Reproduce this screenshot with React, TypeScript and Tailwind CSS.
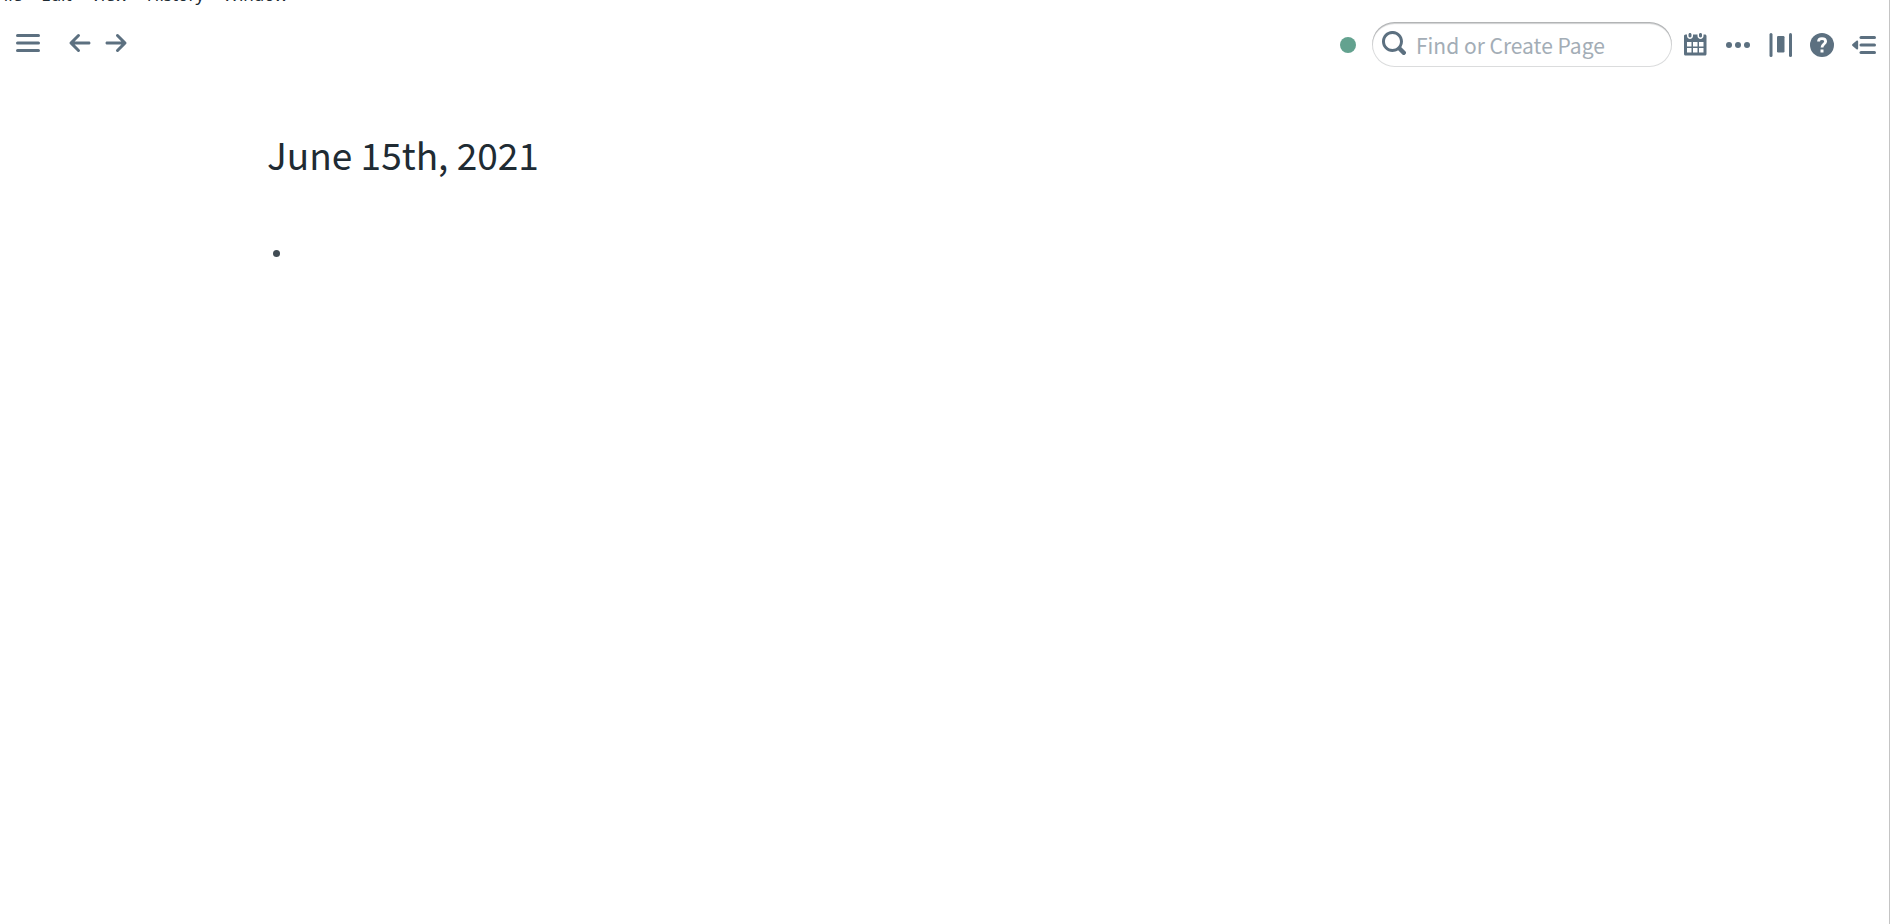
import type { ReactNode } from "react";

const menuItems = ["File", "Edit", "View", "History", "Window"];

function Icon({ children }: { children: ReactNode }) {
  return (
    <svg className="size-6" viewBox="0 0 16 16" fill="currentColor" aria-hidden="true">
      {children}
    </svg>
  );
}

function IconButton({ label, children }: { label: string; children: ReactNode }) {
  return (
    <button type="button" aria-label={label} className="shrink-0 text-[#5c7080] hover:text-[#394b59]">
      <Icon>{children}</Icon>
    </button>
  );
}

function MenuBar() {
  return (
    <nav className="h-2 overflow-hidden">
      <ul className="-ml-[5px] -mt-4 flex gap-[19px] font-['Noto_Sans',sans-serif] text-[17px] leading-[22px] text-[#202b33]">
        {menuItems.map((item) => (
          <li key={item}>
            <button type="button">{item}</button>
          </li>
        ))}
      </ul>
    </nav>
  );
}

function Topbar() {
  return (
    <header className="flex items-center justify-between pl-4 pr-[13px] pt-[14px]">
      <div className="mb-1 flex items-center gap-3">
        <div className="mr-4 flex">
          <IconButton label="Open sidebar">
            <rect y="2" width="16" height="2" rx="1" />
            <rect y="7" width="16" height="2" rx="1" />
            <rect y="12" width="16" height="2" rx="1" />
          </IconButton>
        </div>
        <IconButton label="Back">
          <path d="M13.99 6.99H4.41L7.7 3.7a1.003 1.003 0 00-1.42-1.42l-5 5a1.014 1.014 0 000 1.42l5 5a1.003 1.003 0 001.42-1.42L4.41 8.99H14c.55 0 1-.45 1-1s-.46-1-1.01-1z" />
        </IconButton>
        <IconButton label="Forward">
          <path d="M14.7 7.29l-5-5a.965.965 0 00-.71-.3 1.003 1.003 0 00-.71 1.71l3.29 3.29H1.99c-.55 0-1 .45-1 1s.45 1 1 1h9.59l-3.29 3.29a1.003 1.003 0 001.42 1.42l5-5c.18-.18.29-.43.29-.71s-.12-.52-.3-.7z" />
        </IconButton>
      </div>

      <div className="flex items-center">
        <span className="mr-4 size-4 rounded-full bg-[#63a28f]" />
        <label className="mr-3 flex h-[45px] w-75 items-center rounded-full pl-[10px] pr-4 text-[#5c7080] shadow-[inset_0_0_0_1px_rgba(16,22,26,0.15),inset_0_2px_1px_rgba(16,22,26,0.2)]">
          <span className="mb-1 shrink-0">
            <Icon>
              <path d="M15.55 13.43l-2.67-2.68a6.94 6.94 0 001.11-3.76c0-3.87-3.13-7-7-7s-7 3.13-7 7 3.13 7 7 7c1.39 0 2.68-.42 3.76-1.11l2.68 2.67a1.498 1.498 0 102.12-2.12zm-8.56-1.44c-2.76 0-5-2.24-5-5s2.24-5 5-5 5 2.24 5 5-2.24 5-5 5z" />
            </Icon>
          </span>
          <input
            type="text"
            aria-label="Find or Create Page"
            placeholder="Find or Create Page"
            className="ml-[10px] w-full min-w-0 bg-transparent text-[21px] leading-8 text-[#182026] outline-none placeholder:text-[#a3adb6]"
          />
        </label>
        <div className="flex items-center gap-[18px]">
          <IconButton label="Daily notes">
            <path d="M11 3c.6 0 1-.5 1-1V1c0-.6-.4-1-1-1s-1 .4-1 1v1c0 .5.4 1 1 1zm3-2h-1v1c0 1.1-.9 2-2 2s-2-.9-2-2V1H6v1c0 1.1-.9 2-2 2s-2-.9-2-2V1H1c-.6 0-1 .5-1 1v12c0 .6.4 1 1 1h13c.6 0 1-.4 1-1V2c0-.6-.5-1-1-1zM5 13H2v-3h3v3zm0-4H2V6h3v3zm4 4H6v-3h3v3zm0-4H6V6h3v3zm4 4h-3v-3h3v3zm0-4h-3V6h3v3zM4 3c.6 0 1-.5 1-1V1c0-.6-.4-1-1-1S3 .4 3 1v1c0 .5.4 1 1 1z" />
          </IconButton>
          <IconButton label="More">
            <circle cx="2" cy="8" r="2" />
            <circle cx="8" cy="8" r="2" />
            <circle cx="14" cy="8" r="2" />
          </IconButton>
          <IconButton label="Page width">
            <rect x="1" width="2" height="16" rx="1" />
            <rect x="6" y="2" width="5" height="11" rx="0.8" />
            <rect x="14" width="2" height="16" rx="1" />
          </IconButton>
          <IconButton label="Help">
            <circle cx="8" cy="8" r="8" />
            <path d="M5.7 5.6C5.7 4.3 6.6 3.7 8 3.7s2.4.7 2.4 1.9c0 1.7-2.4 1.8-2.4 4" fill="none" stroke="#fff" strokeWidth="1.9" />
            <path d="M7 11h2v2H7z" fill="#fff" />
          </IconButton>
          <IconButton label="Open right sidebar">
            <path d="M3 5.2L.4 7.4c-.5.4-.5.8 0 1.2L3 10.8c.5.4 1.1.2 1.1-.4V5.6c0-.6-.6-.8-1.1-.4z" />
            <rect x="5" y="2" width="11" height="2" rx="1" />
            <rect x="5" y="7" width="11" height="2" rx="1" />
            <rect x="5" y="12" width="11" height="2" rx="1" />
          </IconButton>
        </div>
      </div>
    </header>
  );
}

export default function App() {
  return (
    <div className="min-h-screen border-r border-[#c4c4c4] bg-white font-['Noto_Sans_CJK_SC',sans-serif]">
      <MenuBar />
      <Topbar />
      <main className="px-[267px] pt-[59px]">
        <h1 className="text-[37px] font-normal leading-[56px] text-[#202b33]">June 15th, 2021</h1>
        <ul className="mt-[53px]">
          <li className="flex h-9 items-center pl-[6px]">
            <span className="size-[7px] rounded-full bg-[#414c54]" />
          </li>
        </ul>
      </main>
    </div>
  );
}
